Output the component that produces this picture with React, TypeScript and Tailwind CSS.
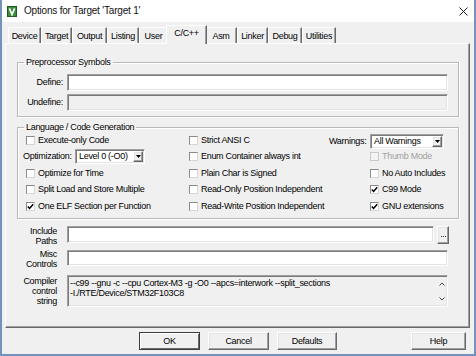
import React from 'react'

const raised =
  "border border-t-white border-l-white border-r-[#696969] border-b-[#696969] shadow-[inset_-1px_-1px_0_#a0a0a0,inset_1px_1px_0_#e3e3e3]"
const sunken =
  "border border-t-[#a0a0a0] border-l-[#a0a0a0] border-r-white border-b-white shadow-[inset_1px_1px_0_#7a7a7a,inset_-1px_-1px_0_#e3e3e3]"
const etched = "border border-[#b9b9b9] shadow-[inset_1px_1px_0_#ffffff,1px_1px_0_#ffffff]"

const tabs = [
  { name: "Device", w: "w-[33px]" },
  { name: "Target", w: "w-[31px]" },
  { name: "Output", w: "w-[35px]" },
  { name: "Listing", w: "w-[32px]" },
  { name: "User", w: "w-[29px]" },
  { name: "C/C++", w: "w-[41px]", active: true },
  { name: "Asm", w: "w-[32px]" },
  { name: "Linker", w: "w-[31px]" },
  { name: "Debug", w: "w-[34px]" },
  { name: "Utilities", w: "w-[34px]" },
]

const Check = ({
  label,
  checked = false,
  disabled = false,
  className = "",
}: {
  label: string
  checked?: boolean
  disabled?: boolean
  className?: string
}) => (
  <div className={`flex items-center gap-[3px] h-[16.5px] ${className}`}>
    <span
      className={`w-[9px] h-[9px] flex items-center justify-center border ${
        disabled
          ? "bg-[#f4f4f4] border-[#c9c9c9]"
          : "bg-white border-t-[#8a8a8a] border-l-[#8a8a8a] border-r-[#d6d6d6] border-b-[#d6d6d6]"
      }`}
    >
      {checked && (
        <svg width="7" height="7" viewBox="0 0 7 7">
          <path d="M0.8 3.4 L2.6 5.4 L6.2 1.2" fill="none" stroke="#000" strokeWidth="1.5" />
        </svg>
      )}
    </span>
    <span className={disabled ? "text-[#a0a0a0]" : ""}>{label}</span>
  </div>
)

const Select = ({ value, w }: { value: string; w: string }) => (
  <div className={`flex h-[15px] ${w} bg-white p-[1px] ${sunken}`}>
    <span className="flex-1 flex items-center pl-[2px]">{value}</span>
    <span className={`w-[10px] flex items-center justify-center bg-[#f0f0f0] ${raised}`}>
      <svg width="5" height="3" viewBox="0 0 5 3">
        <path d="M0 0 H5 L2.5 3 Z" fill="#000" />
      </svg>
    </span>
  </div>
)

const Chevron = ({ up }: { up?: boolean }) => (
  <svg width="6" height="4" viewBox="0 0 6 4">
    <path d={up ? "M0.5 3.5 L3 1 L5.5 3.5" : "M0.5 0.5 L3 3 L5.5 0.5"} fill="none" stroke="#444" strokeWidth="1" />
  </svg>
)

export default function App() {
  return (
    <div className="w-[476px] h-[356px] flex flex-col border-x-2 border-b-2 border-[#7592bd] bg-[#f0f0f0] font-['Liberation_Sans',Arial,sans-serif] text-[9px] tracking-[-0.3px] leading-none text-black overflow-hidden">
      {/* title bar */}
      <div className="h-[22px] shrink-0 bg-white flex items-center pl-[5px] pr-[6px]">
        <svg width="10" height="11" viewBox="0 0 10 11">
          <rect x="0.5" y="0.5" width="9" height="10" fill="#3c8d3c" stroke="#1e5a1e" />
          <path d="M2.4 2.4 L5 8.6 L7.6 2.4" fill="none" stroke="#fff" strokeWidth="1.6" />
        </svg>
        <span className="ml-[7px] text-[10px] tracking-[-0.2px] text-[#111]">Options for Target &apos;Target 1&apos;</span>
        <svg className="ml-auto" width="9" height="9" viewBox="0 0 9 9">
          <path d="M0.5 0.5 L8.5 8.5 M8.5 0.5 L0.5 8.5" stroke="#222" strokeWidth="1" />
        </svg>
      </div>

      <div className="flex-1 flex flex-col px-[3px] pt-[3px]">
        {/* tabs */}
        <div className="flex items-end h-[18px] pl-[3px]">
          {tabs.map((t) =>
            t.active ? (
              <div
                key={t.name}
                className={`relative z-10 ${t.w} h-[19px] -mb-px -mx-[2px] flex justify-center pt-[3px] bg-[#f0f0f0] border-t border-l border-r border-t-white border-l-white border-r-[#696969] shadow-[inset_-1px_0_0_#a0a0a0]`}
              >
                {t.name}
              </div>
            ) : (
              <div
                key={t.name}
                className={`${t.w} h-[16px] flex items-center justify-center pt-[2px] border-t border-l border-r border-t-white border-l-white border-r-[#696969] shadow-[inset_-1px_0_0_#a0a0a0]`}
              >
                {t.name}
              </div>
            )
          )}
        </div>

        {/* tab panel */}
        <div className="w-[465px] h-[285px] flex flex-col pt-[12px] pl-[11px] border border-t-white border-l-white border-r-[#696969] border-b-[#696969] shadow-[inset_-1px_-1px_0_#a0a0a0]">
          <fieldset className={`w-[442px] h-[61px] ${etched}`}>
            <legend className="ml-[6px] px-[2px] leading-[12px]">Preprocessor Symbols</legend>
            <div className="flex flex-col gap-[3px] mt-[6px]">
              <div className="flex items-center h-[17px] gap-[4px]">
                <span className="w-[45px] text-right">Define:</span>
                <div className={`w-[381px] h-[17px] bg-white ${sunken}`} />
              </div>
              <div className="flex items-center h-[17px] gap-[4px]">
                <span className="w-[45px] text-right">Undefine:</span>
                <div className={`w-[381px] h-[17px] bg-[#f0f0f0] ${sunken}`} />
              </div>
            </div>
          </fieldset>

          <fieldset className={`mt-[4px] w-[442px] h-[98px] ${etched}`}>
            <legend className="ml-[6px] px-[2px] leading-[12px]">Language / Code Generation</legend>
            <div className="flex -mt-[1px] pl-[5px]">
              <div className="flex flex-col w-[166px]">
                <Check label="Execute-only Code" className="ml-[3px]" />
                <div className="flex items-center h-[16.5px]">
                  <span className="w-[52px]">Optimization:</span>
                  <Select value="Level 0 (-O0)" w="w-[70px]" />
                </div>
                <Check label="Optimize for Time" className="ml-[3px]" />
                <Check label="Split Load and Store Multiple" className="ml-[3px]" />
                <Check label="One ELF Section per Function" checked className="ml-[3px]" />
              </div>
              <div className="flex flex-col w-[140px]">
                <Check label="Strict ANSI C" />
                <Check label="Enum Container always int" />
                <Check label="Plain Char is Signed" />
                <Check label="Read-Only Position Independent" />
                <Check label="Read-Write Position Independent" />
              </div>
              <div className="flex flex-col">
                <div className="flex items-center h-[16.5px] pt-[2px]">
                  <span className="w-[41px]">Warnings:</span>
                  <Select value="All Warnings" w="w-[74px]" />
                </div>
                <Check label="Thumb Mode" disabled className="ml-[41px]" />
                <Check label="No Auto Includes" className="ml-[41px]" />
                <Check label="C99 Mode" checked className="ml-[41px]" />
                <Check label="GNU extensions" checked className="ml-[41px]" />
              </div>
            </div>
          </fieldset>

          {/* paths and controls */}
          <div className="mt-[7px] flex flex-col">
            <div className="flex items-start h-[23px] gap-[10px]">
              <div className="w-[40px] text-right leading-[10px]">
                Include
                <br />
                Paths
              </div>
              <div className={`w-[367px] h-[17px] bg-white ${sunken}`} />
              <div className={`-ml-[7px] w-[12px] h-[18px] flex items-end justify-center gap-[1px] pb-[6px] ${raised}`}>
                <span className="w-px h-px bg-[#333]" />
                <span className="w-px h-px bg-[#333]" />
                <span className="w-px h-px bg-[#333]" />
              </div>
            </div>
            <div className="flex items-start h-[26px] gap-[10px]">
              <div className="w-[40px] text-right leading-[10px]">
                Misc
                <br />
                Controls
              </div>
              <div className={`mt-[1px] w-[381px] h-[16px] bg-white ${sunken}`} />
            </div>
            <div className="flex items-start gap-[10px]">
              <div className="w-[40px] text-right leading-[10px] pt-[1px]">
                Compiler
                <br />
                control
                <br />
                string
              </div>
              <div className={`w-[381px] h-[32px] flex bg-[#f0f0f0] ${sunken}`}>
                <div className="flex-1 pl-[2px] pt-[2px] leading-[10px] whitespace-nowrap">
                  --c99 --gnu -c --cpu Cortex-M3 -g -O0 --apcs=interwork --split_sections
                  <br />
                  -I./RTE/Device/STM32F103C8
                </div>
                <div className="w-[10px] flex flex-col items-center justify-between pt-[6px] pb-[5px]">
                  <Chevron up />
                  <Chevron />
                </div>
              </div>
            </div>
          </div>
        </div>

        {/* buttons */}
        <div className="mt-[4px] h-[18px] flex gap-[8px] pl-[134px] pr-[5px]">
          <button className="w-[61px] h-[18px] border border-[#3c3c3c] shadow-[inset_1px_1px_0_#ffffff,inset_-1px_-1px_0_#696969]">OK</button>
          <button className={`w-[61px] h-[18px] ${raised}`}>Cancel</button>
          <button className={`w-[60px] h-[18px] ${raised}`}>Defaults</button>
          <button className={`ml-auto w-[55px] h-[18px] ${raised}`}>Help</button>
        </div>
      </div>
    </div>
  )
}
